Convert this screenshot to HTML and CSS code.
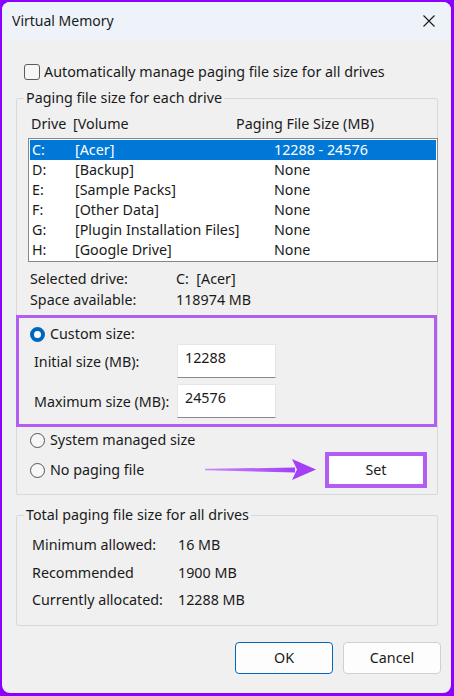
FILE: index.html
```html
<!DOCTYPE html>
<html>
<head>
<meta charset="utf-8">
<link rel="stylesheet" href="styles.css">
</head>
<body>
<div class="window">
  <div class="titlebar">
    <span class="title">Virtual Memory</span>
    <svg class="close" width="12" height="12" viewBox="0 0 12 12"><path d="M0.5 0.5 L11.5 11.5 M11.5 0.5 L0.5 11.5" stroke="#1a1a1a" stroke-width="1.1" fill="none"/></svg>
  </div>
  <div class="content">
    <div class="auto-row">
      <span class="checkbox"></span>
      <span>Automatically manage paging file size for all drives</span>
    </div>

    <div class="group group-drives">
      <span class="legend">Paging file size for each drive</span>
      <div class="list-header">
        <span class="h-drive">Drive</span>
        <span class="h-vol">[Volume</span>
        <span class="h-size">Paging File Size (MB)</span>
      </div>
      <div class="listbox">
        <div class="lrow selected"><span class="c-drive">C:</span><span class="c-vol">[Acer]</span><span class="c-size">12288 - 24576</span></div>
        <div class="lrow"><span class="c-drive">D:</span><span class="c-vol">[Backup]</span><span class="c-size">None</span></div>
        <div class="lrow"><span class="c-drive">E:</span><span class="c-vol">[Sample Packs]</span><span class="c-size">None</span></div>
        <div class="lrow"><span class="c-drive">F:</span><span class="c-vol">[Other Data]</span><span class="c-size">None</span></div>
        <div class="lrow"><span class="c-drive">G:</span><span class="c-vol">[Plugin Installation Files]</span><span class="c-size">None</span></div>
        <div class="lrow"><span class="c-drive">H:</span><span class="c-vol">[Google Drive]</span><span class="c-size">None</span></div>
      </div>
      <div class="info">
        <div class="info-row"><span class="i-label">Selected drive:</span><span>C:&nbsp; [Acer]</span></div>
        <div class="info-row"><span class="i-label">Space available:</span><span>118974 MB</span></div>
      </div>
      <div class="custom-box">
        <div class="radio-row">
          <span class="radio checked"></span><span>Custom size:</span>
        </div>
        <div class="size-grid">
          <span class="s-label">Initial size (MB):</span>
          <span class="input">12288</span>
          <span class="s-label">Maximum size (MB):</span>
          <span class="input">24576</span>
        </div>
      </div>
      <div class="radio-row plain">
        <span class="radio"></span><span>System managed size</span>
      </div>
      <div class="nopaging-row">
        <div class="radio-row">
          <span class="radio"></span><span>No paging file</span>
        </div>
        <svg class="arrow" width="112" height="22" viewBox="0 0 112 22">
          <defs>
            <linearGradient id="ag" x1="0" y1="0" x2="1" y2="0">
              <stop offset="0" stop-color="#c98cfb"/>
              <stop offset="1" stop-color="#a53ef7"/>
            </linearGradient>
          </defs>
          <polygon points="0,9.8 90,8.6 90,13.4 0,11.2" fill="url(#ag)"/>
          <polygon points="87,0 111,10.5 87,21 92,10.5" fill="#a53ef7"/>
        </svg>
        <div class="set-btn"><span>Set</span></div>
      </div>
    </div>

    <div class="group group-total">
      <span class="legend">Total paging file size for all drives</span>
      <div class="t-row"><span class="t-label">Minimum allowed:</span><span>16 MB</span></div>
      <div class="t-row"><span class="t-label">Recommended</span><span>1900 MB</span></div>
      <div class="t-row"><span class="t-label">Currently allocated:</span><span>12288 MB</span></div>
    </div>

    <div class="buttons">
      <div class="btn btn-ok">OK</div>
      <div class="btn">Cancel</div>
    </div>
  </div>
</div>
</body>
</html>
```

FILE: styles.css
```css
* { box-sizing: border-box; }
html, body { margin: 0; padding: 0; }
body {
  width: 454px;
  height: 696px;
  background: #8c00ff;
  padding: 2px 3px 3px 2px;
  font-family: "Noto Sans", "Open Sans", sans-serif;
  font-size: 14.3px;
  color: #1a1a1a;
  overflow: hidden;
}
.window {
  width: 449px;
  height: 691px;
  background: #f0f0f0;
  border-radius: 8px;
  overflow: hidden;
  display: flex;
  flex-direction: column;
}
.titlebar {
  height: 37px;
  background: #eef3f9;
  display: flex;
  align-items: center;
  justify-content: space-between;
  padding: 0 16px 0 10px;
  font-size: 14px;
}
.title { line-height: 20px; }
.close { display: block; }
.content {
  display: flex;
  flex-direction: column;
}
.auto-row {
  display: flex;
  align-items: center;
  gap: 4px;
  margin-top: 23px;
  padding-left: 22px;
  line-height: 20px;
}
.checkbox {
  width: 16px;
  height: 16px;
  border: 1px solid #5c5c5c;
  border-radius: 3px;
  background: #f6f6f6;
}
.group {
  position: relative;
  margin: 16px 13px 0 14px;
  border: 1px solid #d9d9d9;
  border-radius: 2px;
}
.legend {
  position: absolute;
  top: -11px;
  left: 7px;
  padding: 0 2px;
  background: #f0f0f0;
  line-height: 20px;
}
.group-drives {
  padding: 15px 0 6px 0;
}
.list-header {
  display: flex;
  line-height: 20px;
  height: 20px;
  padding-left: 14px;
}
.h-drive { width: 42px; }
.h-vol { width: 163px; }
.listbox {
  margin: 4px -1px 0 11px;
  height: 124px;
  border: 1px solid #828790;
  background: #fff;
  padding: 1px;
}
.lrow {
  display: flex;
  height: 20px;
  line-height: 20px;
  padding-left: 2px;
  white-space: nowrap;
}
.lrow.selected {
  background: #0078d7;
  color: #fff;
}
.c-drive { width: 43px; }
.c-vol { width: 199px; }
.info {
  margin-top: 7px;
  padding-left: 13px;
}
.info-row {
  display: flex;
  height: 21px;
  line-height: 20px;
}
.i-label { width: 146px; }
.custom-box {
  margin: 4px 0 0 -1px;
  border: 3px solid #b25ef3;
  padding: 6px 0 6px 11px;
}
.radio-row {
  display: flex;
  align-items: center;
  gap: 5px;
  line-height: 20px;
}
.radio {
  width: 15px;
  height: 15px;
  border-radius: 50%;
  border: 1px solid #555;
  background: #f7f7f7;
  flex: none;
}
.radio.checked {
  border: 4.5px solid #0067c0;
  background: #fff;
}
.size-grid {
  display: grid;
  grid-template-columns: 143px 99px;
  row-gap: 6px;
  align-items: center;
  padding-left: 4px;
}
.s-label { line-height: 20px; padding-top: 1px; }
.input {
  height: 34px;
  background: #fff;
  border: 1px solid #e6e6e6;
  border-bottom: 1px solid #8a8a8a;
  padding: 3px 7px;
  line-height: 20px;
}
.plain {
  margin-top: 3px;
  padding-left: 13px;
}
.nopaging-row {
  display: flex;
  align-items: center;
  margin-top: 2px;
  padding-left: 13px;
  height: 36px;
}
.arrow {
  display: block;
  margin-left: auto;
}
.set-btn {
  margin: 0 10px 0 8px;
  width: 102px;
  height: 36px;
  border: 4px solid #b25ef3;
  background: #fff;
  display: flex;
  align-items: center;
  justify-content: center;
  line-height: 20px;
}
.group-total {
  margin-top: 20px;
  padding: 15px 0 11px 15px;
}
.t-row {
  display: flex;
  height: 27.5px;
  align-items: center;
}
.t-label { width: 146px; }
.buttons {
  display: flex;
  justify-content: flex-end;
  gap: 10px;
  margin: 16px 10px 0 0;
}
.btn {
  width: 98px;
  height: 32px;
  border: 1px solid #d0d0d0;
  border-radius: 4px;
  background: #fdfdfd;
  display: flex;
  align-items: center;
  justify-content: center;
  line-height: 20px;
}
.btn-ok {
  border-color: #0067c0;
}
```
